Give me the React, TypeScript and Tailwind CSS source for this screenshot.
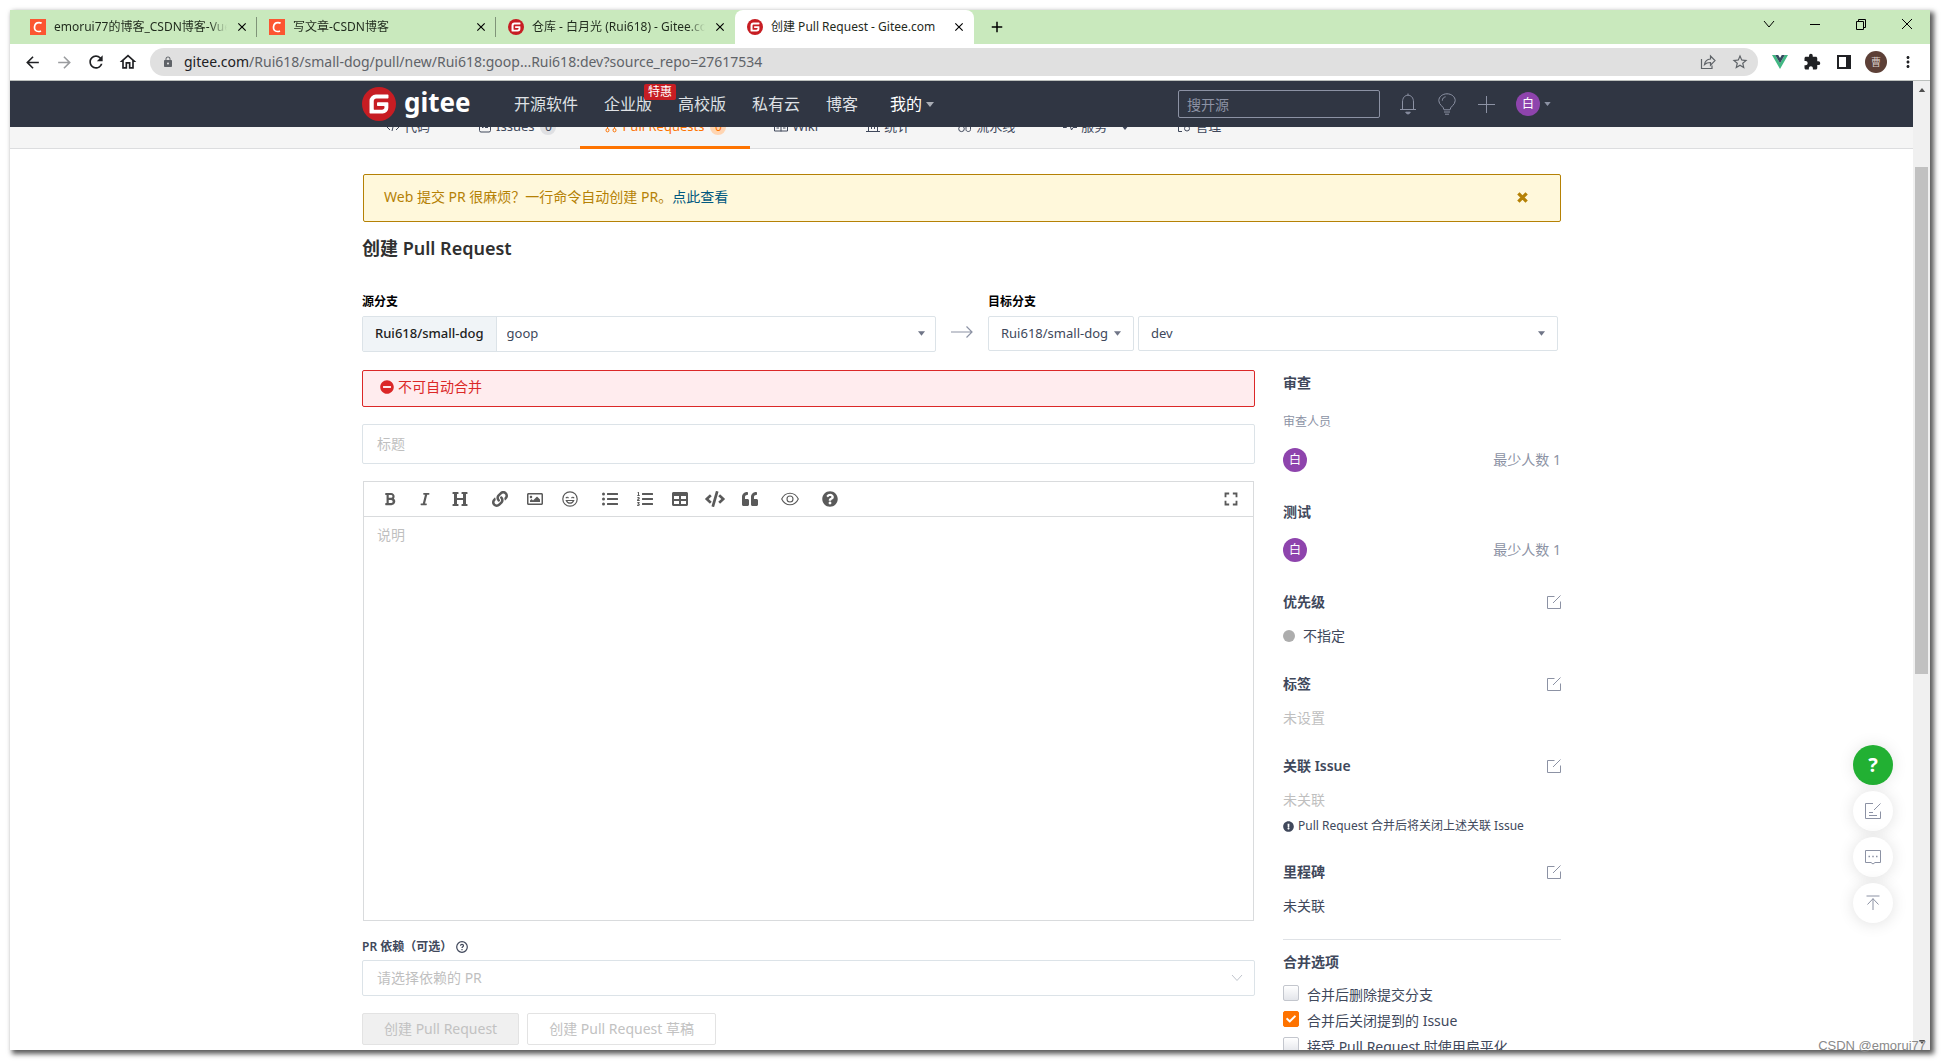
import React, { useState } from 'react';
import {
  FaBold,
  FaItalic,
  FaHeading,
  FaLink,
  FaRegImage,
  FaListUl,
  FaListOl,
  FaTable,
  FaCode,
  FaQuoteLeft,
  FaQuestionCircle,
  FaMinusCircle,
  FaExclamationCircle,
  FaCheck,
} from 'react-icons/fa';
import {
  MdArrowBack,
  MdArrowForward,
  MdRefresh,
  MdOutlineHome,
  MdLock,
  MdStarBorder,
  MdExtension,
  MdMoreVert,
  MdClose,
  MdAdd,
  MdFullscreen,
} from 'react-icons/md';

type IconProps = { className?: string };

/* ---------- 图标 ---------- */

const GiteeMark: React.FC<IconProps> = ({ className }) => (
  <svg className={className} viewBox="0 0 24 24">
    <circle cx="12" cy="12" r="12" fill="#c71d23" />
    <path
      d="M18.1 5.3H9.8a4.5 4.5 0 0 0-4.5 4.5v8.3c0 .3.3.6.6.6h8.7a4 4 0 0 0 4-4v-3.4a.6.6 0 0 0-.6-.6h-6.8a.6.6 0 0 0-.6.6v1.5c0 .3.3.6.6.6h4.1c.3 0 .6.3.6.6v.3c0 1-.8 1.8-1.8 1.8H8.9a.6.6 0 0 1-.6-.6V9.9c0-1 .8-1.8 1.8-1.8h8c.3 0 .6-.3.6-.6V5.9a.6.6 0 0 0-.6-.6z"
      fill="#fff"
    />
  </svg>
);

const CsdnMark: React.FC<IconProps> = ({ className }) => (
  <svg className={className} viewBox="0 0 16 16">
    <rect width="16" height="16" fill="#fc5531" />
    <path d="M11.6 4.3C10.9 3.8 10 3.6 9 3.6 6.6 3.6 4.7 5.4 4.5 8.1c-.2 2.7 1.3 4.4 3.8 4.4 1 0 1.9-.2 2.7-.6" fill="none" stroke="#fff" strokeWidth="1.7" />
  </svg>
);

const Caret: React.FC<IconProps> = ({ className }) => (
  <svg className={className} viewBox="0 0 8 5">
    <path d="M0 0h8L4 5z" fill="currentColor" />
  </svg>
);

const CrossIcon: React.FC<IconProps> = ({ className }) => (
  <svg className={className} viewBox="0 0 12 12" stroke="currentColor" strokeWidth="3.6">
    <path d="M1.5 1.5l9 9M10.5 1.5l-9 9" />
  </svg>
);

const EditIcon: React.FC<IconProps> = ({ className }) => (
  <svg className={className} viewBox="0 0 14 14" fill="none" stroke="currentColor">
    <path d="M7.5 1.5h-7v12h13v-7M6 8l7.5-7.5" />
  </svg>
);

const BellIcon: React.FC<IconProps> = ({ className }) => (
  <svg className={className} viewBox="0 0 20 22" fill="none" stroke="currentColor">
    <path d="M10 .5v1.7M4.5 16.5V9c0-4 2.2-6.8 5.5-6.8s5.5 2.8 5.5 6.8v7.5M2 16.5h16" />
    <path d="M7.7 19.2h4.6l-1.3 1.6h-2z" fill="currentColor" />
  </svg>
);

const BulbIcon: React.FC<IconProps> = ({ className }) => (
  <svg className={className} viewBox="0 0 20 22" fill="none" stroke="currentColor">
    <path d="M7 16.8c0-3.2-5.2-4.800-5.2-9.100C1.800 3.700 5.500.8 10 .8s8.200 2.900 8.200 6.900c0 4.300-5.200 5.900-5.200 9.100zM5.300 7.700c0-2.200 1.400-3.600 3.300-3.900M7 19h6M8 21.200h4" />
  </svg>
);

const SmileIcon: React.FC<IconProps> = ({ className }) => (
  <svg className={className} viewBox="0 0 16 16" fill="none" stroke="currentColor" strokeWidth="1.2">
    <circle cx="8" cy="8" r="7.2" />
    <path d="M4 7.2c.4-1.3 2-1.3 2.4 0M9.6 7.2c.4-1.3 2-1.3 2.4 0M4.3 9.5c.7 1.8 2 2.7 3.7 2.7s3-.9 3.7-2.7z" />
  </svg>
);

const EyeIcon: React.FC<IconProps> = ({ className }) => (
  <svg className={className} viewBox="0 0 18 14" fill="none" stroke="currentColor" strokeWidth="1.1">
    <path d="M.7 7C2.5 3.2 5.5 1.2 9 1.2S15.5 3.2 17.3 7c-1.8 3.8-4.8 5.800-8.300 5.800S2.500 10.800.7 7z" />
    <circle cx="9" cy="7" r="3" />
  </svg>
);

const VueIcon: React.FC<IconProps> = ({ className }) => (
  <svg className={className} viewBox="0 0 16 14">
    <path d="M0 0h3.2L8 8.3 12.8 0H16L8 14z" fill="#41b883" />
    <path d="M3.2 0h3L8 3.1 9.8 0h3L8 8.3z" fill="#34495e" />
  </svg>
);

/* ---------- 浏览器外框 ---------- */

const tabs = [
  { title: 'emorui77的博客_CSDN博客-Vue', csdn: true, active: false },
  { title: '写文章-CSDN博客', csdn: true, active: false },
  { title: '仓库 - 白月光 (Rui618) - Gitee.com', csdn: false, active: false },
  { title: '创建 Pull Request - Gitee.com', csdn: false, active: true },
];

const TabStrip: React.FC = () => (
  <div className="flex h-[34px] shrink-0 items-stretch bg-[#c9e9bd] pl-2 text-xs text-[#1f2a1c]">
    {tabs.map((tab, i) => (
      <div
        key={tab.title}
        className={`flex w-[239px] items-center pr-2 pl-3 ${
          tab.active ? 'rounded-t-lg bg-white' : i < 2 ? 'relative after:absolute after:right-0 after:h-5 after:w-px after:bg-[#7f9478]' : ''
        }`}
      >
        {tab.csdn ? <CsdnMark className="h-4 w-4 shrink-0" /> : <GiteeMark className="h-4 w-4 shrink-0" />}
        <span className={`ml-2 flex-1 overflow-hidden whitespace-nowrap ${tab.active ? '' : 'mask-r-from-90%'}`}>{tab.title}</span>
        <button aria-label="关闭标签页" className="ml-2 text-black">
          <MdClose className="h-3.5 w-3.5" />
        </button>
      </div>
    ))}
    <button aria-label="新标签页" className="ml-3.5 text-black">
      <MdAdd className="h-[18px] w-[18px]" />
    </button>
    <div className="ml-auto flex h-7 items-center text-black">
      <button aria-label="搜索标签页" className="flex w-[46px] justify-center">
        <svg className="h-3 w-3" viewBox="0 0 12 12" fill="none" stroke="currentColor"><path d="M1 3l5 6 5-6" /></svg>
      </button>
      <button aria-label="最小化" className="flex w-[46px] justify-center">
        <svg className="h-3 w-3" viewBox="0 0 12 12" fill="none" stroke="currentColor"><path d="M1 6.5h10" /></svg>
      </button>
      <button aria-label="还原" className="flex w-[46px] justify-center">
        <svg className="h-3 w-3" viewBox="0 0 12 12" fill="none" stroke="currentColor"><path d="M1.5 3.5h7v8h-7zM3.5 3.5v-2h7v8h-2" /></svg>
      </button>
      <button aria-label="关闭" className="flex w-[46px] justify-center">
        <svg className="h-3 w-3" viewBox="0 0 12 12" fill="none" stroke="currentColor"><path d="M1 1l10 10M11 1L1 11" /></svg>
      </button>
    </div>
  </div>
);

const AddressBar: React.FC = () => (
  <div className="flex h-[37px] shrink-0 items-center border-b border-[#bcc0bd] bg-white pr-1.5 pl-1.5 text-[#202124]">
    <button aria-label="后退" className="flex w-8 justify-center"><MdArrowBack className="h-[19px] w-[19px]" /></button>
    <button aria-label="前进" className="flex w-8 justify-center text-[#9a9c9f]"><MdArrowForward className="h-[19px] w-[19px]" /></button>
    <button aria-label="刷新" className="flex w-8 justify-center"><MdRefresh className="h-5 w-5" /></button>
    <button aria-label="主页" className="flex w-8 justify-center"><MdOutlineHome className="h-5 w-5" /></button>
    <div className="ml-1.5 flex h-7 flex-1 items-center rounded-full bg-[#e0e0e0] pr-2 pl-3 text-[#5f6368]">
      <MdLock className="h-3 w-3" />
      <div className="ml-2.5 flex-1 text-sm whitespace-nowrap">
        <span className="text-[#202124]">gitee.com</span>/Rui618/small-dog/pull/new/Rui618:goop...Rui618:dev?source_repo=27617534
      </div>
      <button aria-label="分享此页面" className="flex w-8 justify-center">
        <svg className="h-4 w-4" viewBox="0 0 16 16" fill="none" stroke="currentColor" strokeWidth="1.2">
          <path d="M1.5 5v9.5h10.5v-3M4.500 10.500c.5-3.500 2.500-5.300 6-5.500V2l4.500 4.600-4.500 4.600V8.500c-2.700 0-4.500.5-6 2z" />
        </svg>
      </button>
      <button aria-label="收藏" className="-mr-1.5 flex w-8 justify-center"><MdStarBorder className="h-[18px] w-[18px]" /></button>
    </div>
    <div className="ml-1.5 flex">
      <button aria-label="Vue.js devtools" className="flex w-8 items-center justify-center"><VueIcon className="w-4" /></button>
      <button aria-label="扩展程序" className="flex w-8 items-center justify-center"><MdExtension className="h-[18px] w-[18px]" /></button>
      <button aria-label="侧边栏" className="flex w-8 items-center justify-center">
        <svg className="h-3.5 w-3.5" viewBox="0 0 14 14"><path d="M1 1h12v12H1z" fill="none" stroke="currentColor" strokeWidth="2" /><path d="M9 0h5v14H9z" fill="currentColor" /></svg>
      </button>
      <button aria-label="个人资料" className="flex w-8 items-center justify-center">
        <span className="flex h-[22px] w-[22px] items-center justify-center rounded-full bg-[#5d4037] text-[10px] text-[#d7ccc8]">曹</span>
      </button>
      <button aria-label="更多" className="flex w-8 items-center justify-center"><MdMoreVert className="h-[18px] w-[18px]" /></button>
    </div>
  </div>
);

/* ---------- Gitee 页面 ---------- */

const Avatar: React.FC = () => (
  <span className="flex h-6 w-6 items-center justify-center rounded-full bg-[#8e44ad] text-xs text-white">白</span>
);

const SiteHeader: React.FC = () => (
  <header className="relative z-10 h-[46px] bg-[#303643]">
    <div className="mx-auto flex h-full max-w-[1199px] items-center text-base text-[#dfe1e5]">
      <a href="#" className="flex w-[152px] items-center text-white">
        <GiteeMark className="h-[34px] w-[34px]" />
        <span className="ml-2 pb-1 text-[26px] leading-8 font-bold">gitee</span>
      </a>
      <nav className="flex gap-[26px]">
        <a href="#">开源软件</a>
        <a href="#" className="relative">
          企业版
          <span className="absolute -top-2 left-10 rounded-xs bg-[#c71d23] px-1 text-xs leading-4 whitespace-nowrap text-white">特惠</span>
        </a>
        <a href="#">高校版</a>
        <a href="#">私有云</a>
        <a href="#">博客</a>
        <a href="#" className="ml-1.5 flex items-center gap-1 text-white">
          我的<Caret className="h-[5px] w-2 text-[#a9adb5]" />
        </a>
      </nav>
      <div className="ml-auto flex items-center text-[#8c92a4]">
        <input
          aria-label="搜开源"
          placeholder="搜开源"
          className="mr-2 h-7 w-[202px] rounded-xs border border-[#8c92a4] bg-transparent px-2 text-sm text-white outline-none placeholder:text-[#8c92a4]"
        />
        <button aria-label="通知" className="flex w-[39px] justify-center"><BellIcon className="h-[22px] w-5" /></button>
        <button aria-label="灵感" className="flex w-[39px] justify-center"><BulbIcon className="h-[22px] w-5" /></button>
        <button aria-label="新建" className="flex w-[39px] justify-center">
          <svg className="h-[18px] w-[18px]" viewBox="0 0 18 18" stroke="currentColor"><path d="M1 9.5h17M9.5 1v17" /></svg>
        </button>
        <button aria-label="个人菜单" className="ml-[11px] flex items-center gap-1 pr-2.5">
          <Avatar />
          <Caret className="h-1 w-[7px]" />
        </button>
      </div>
    </div>
  </header>
);

const repoTabs = [
  { name: '代码', icon: <path d="M4 4L1 7l3 3M10 4l3 3-3 3M8 3L6 11" /> },
  { name: 'Issues', count: 0, icon: <path d="M3 1.5h8a1.5 1.5 0 0 1 1.5 1.5v7.5a1.5 1.5 0 0 1-1.5 1.5H3a1.5 1.5 0 0 1-1.5-1.5V3A1.5 1.5 0 0 1 3 1.5zM4 7.500h1.500M7 7.500h3" /> },
  { name: 'Pull Requests', count: 0, active: true, icon: <path d="M3.5 8.5V3M10.500 8.500V5.500L7.500 2.500M3.500 8.500a1.500 1.700 0 1 0 0 3.400 1.500 1.700 0 0 0 0-3.400zM10.500 8.500a1.500 1.700 0 1 0 0 3.400 1.500 1.700 0 0 0 0-3.400z" /> },
  { name: 'Wiki', icon: <path d="M7 3v8.5M.5 2.500H5c1.300 0 2 .5 2 1 0-.5.7-1 2-1h4.500v8.500H.5zM2.500 8h2.500M9 8h2.500" /> },
  { name: '统计', icon: <path d="M1 1.5h12M0 11.500h14M2.500 11V5M5.500 9V5M8.500 9V4M11.500 11V2" /> },
  { name: '流水线', icon: <path d="M3.5 1v4M3.500 6a2.800 2.800 0 1 0 0 5.600 2.800 2.800 0 0 0 0-5.600zM8 1v8.500c0 1.300 1 2 2.300 2s2.200-.7 2.200-2V3" /> },
  { name: '服务', caret: true, icon: <path d="M0 7.5h3.500L6 2.500l2.500 7.500 1.500-2.500h4" /> },
  { name: '管理', icon: <path d="M7 1.5H1.500v10H5M8 3.500h4M10 6a2.300 2.300 0 1 0 0 5 2.300 2.300 0 0 0 0-5z" /> },
];

const RepoNav: React.FC = () => (
  <div className="-mt-5 border-b border-[#dcdddf] bg-[#f5f5f5]">
    <nav className="mx-auto flex max-w-[1199px] text-[13px] text-[#40485b]">
      {repoTabs.map((tab) => (
        <a
          key={tab.name}
          href="#"
          className={`-mb-px flex h-[42px] items-center gap-1 px-6 ${tab.active ? 'border-b-3 border-[#fe7300] pt-px text-[#fe7300]' : 'pb-0.5'}`}
        >
          <svg className="h-3.5 w-3.5" viewBox="0 0 14 14" fill="none" stroke="currentColor">{tab.icon}</svg>
          {tab.name}
          {tab.count !== undefined && (
            <span className={`ml-0.5 flex h-4 w-4 items-center justify-center rounded-full text-xs ${tab.active ? 'bg-[#ffd5b2]' : 'bg-[#dfe0e3]'}`}>
              {tab.count}
            </span>
          )}
          {tab.caret && <Caret className="ml-2.5 h-[5px] w-2" />}
        </a>
      ))}
    </nav>
  </div>
);

const BranchPicker: React.FC = () => (
  <div className="mt-[31px] flex pr-[3px] text-[13px] text-[#40485b]">
    <div className="flex-[574]">
      <label htmlFor="source-branch" className="block text-xs leading-[18px] font-bold text-black">源分支</label>
      <div className="mt-[5px] flex h-9 items-stretch rounded-xs border border-[#dce3e8]">
        <span className="flex items-center border-r border-[#dce3e8] bg-[#f0f4f7] px-3 font-medium text-[#212121]">Rui618/small-dog</span>
        <div className="relative flex-1">
          <select id="source-branch" className="h-full w-full appearance-none bg-transparent px-2.5 outline-none">
            <option>goop</option>
          </select>
          <Caret className="pointer-events-none absolute top-3.5 right-2.5 h-[5px] w-[7px] text-[#6f7587]" />
        </div>
      </div>
    </div>
    <div className="flex w-[52px] items-end justify-center pb-[14px] text-[#8c92a4]">
      <svg className="h-3 w-[22px]" viewBox="0 0 22 12" fill="none" stroke="currentColor" strokeWidth="1.2"><path d="M0 6h21M15.5.5L21 6l-5.5 5.5" /></svg>
    </div>
    <div className="flex-[570]">
      <label htmlFor="target-branch" className="block text-xs leading-[18px] font-bold text-black">目标分支</label>
      <div className="mt-[5px] flex h-[35px] gap-1">
        <div className="relative w-[146px] rounded-xs border border-[#dce3e8]">
          <select aria-label="目标仓库" className="h-full w-full appearance-none bg-transparent pl-3 outline-none">
            <option>Rui618/small-dog</option>
          </select>
          <Caret className="pointer-events-none absolute top-3.5 right-3 h-[5px] w-[7px] text-[#6f7587]" />
        </div>
        <div className="relative flex-1 rounded-xs border border-[#dce3e8]">
          <select id="target-branch" className="h-full w-full appearance-none bg-transparent px-3 outline-none">
            <option>dev</option>
          </select>
          <Caret className="pointer-events-none absolute top-3.5 right-3 h-[5px] w-[7px] text-[#6f7587]" />
        </div>
      </div>
    </div>
  </div>
);

const toolGroups = [
  [
    { label: '粗体', icon: <FaBold className="h-3.5 w-3.5" /> },
    { label: '斜体', icon: <FaItalic className="h-3.5 w-3.5" /> },
    { label: '标题', icon: <FaHeading className="h-4 w-4" /> },
  ],
  [
    { label: '链接', icon: <FaLink className="h-4 w-4" /> },
    { label: '图片', icon: <FaRegImage className="h-4 w-4" /> },
    { label: '表情', icon: <SmileIcon className="h-4 w-4" /> },
  ],
  [
    { label: '无序列表', icon: <FaListUl className="h-4 w-4" /> },
    { label: '有序列表', icon: <FaListOl className="h-4 w-4" /> },
    { label: '表格', icon: <FaTable className="h-4 w-4" /> },
    { label: '代码', icon: <FaCode className="h-4 w-5" /> },
    { label: '引用', icon: <FaQuoteLeft className="h-4 w-4" /> },
  ],
  [{ label: '预览', icon: <EyeIcon className="h-3.5 w-[18px]" /> }],
  [{ label: '帮助', icon: <FaQuestionCircle className="h-4 w-4" /> }],
];

const Editor: React.FC = () => {
  const [description, setDescription] = useState('');

  return (
    <div className="mx-px mt-[17px] flex h-[440px] flex-col border border-[#d9dbdd]">
      <div className="flex h-[35px] items-center gap-[5px] border-b border-[#d9dbdd] pr-[11px] pl-2 text-[#5a5a5a]">
        {toolGroups.map((group, i) => (
          <div key={i} className="flex">
            {group.map((tool) => (
              <button key={tool.label} aria-label={tool.label} className="flex w-[35px] items-center justify-center">
                {tool.icon}
              </button>
            ))}
          </div>
        ))}
        <button aria-label="全屏" className="ml-auto"><MdFullscreen className="h-[22px] w-[22px]" /></button>
      </div>
      <textarea
        aria-label="说明"
        placeholder="说明"
        value={description}
        onChange={(e) => setDescription(e.target.value)}
        className="flex-1 resize-none px-[13px] py-1.5 text-sm leading-6 outline-none placeholder:text-[#bfbfbf]"
      />
    </div>
  );
};

const Heading: React.FC<{ children: React.ReactNode; className?: string; editable?: boolean }> = ({ children, className, editable }) => (
  <div className={`flex items-center justify-between leading-5 ${className ?? ''}`}>
    <h2 className="font-semibold">{children}</h2>
    {editable && (
      <button aria-label="编辑" className="text-[#8c92a4]"><EditIcon className="h-3.5 w-3.5" /></button>
    )}
  </div>
);

const Reviewer: React.FC = () => (
  <div className="mt-4 flex items-center justify-between text-[#8c92a4]">
    <Avatar />
    <span>最少人数 1</span>
  </div>
);

const mergeOptions = [
  { id: 'prune', label: '合并后删除提交分支', checked: false },
  { id: 'close-issue', label: '合并后关闭提到的 Issue', checked: true },
  { id: 'squash', label: '接受 Pull Request 时使用扁平化', checked: false },
];

const Sidebar: React.FC = () => {
  const [options, setOptions] = useState(mergeOptions);

  const toggleOption = (id: string) => {
    setOptions(options.map((o) => (o.id === id ? { ...o, checked: !o.checked } : o)));
  };

  return (
    <aside className="w-[278px] shrink-0 pt-[3px] text-sm leading-5 text-[#40485b]">
      <Heading>审查</Heading>
      <p className="mt-[19px] text-xs leading-5 text-[#8c92a4]">审查人员</p>
      <Reviewer />

      <Heading className="mt-[30px]">测试</Heading>
      <Reviewer />

      <Heading editable className="mt-[30px]">优先级</Heading>
      <p className="mt-3.5 flex items-center gap-2">
        <span className="h-3 w-3 rounded-full bg-[#adadad]" />不指定
      </p>

      <Heading editable className="mt-7">标签</Heading>
      <p className="mt-3.5 text-[#bfbfbf]">未设置</p>

      <Heading editable className="mt-7">关联 Issue</Heading>
      <p className="mt-3.5 text-[#bfbfbf]">未关联</p>
      <p className="mt-1.5 flex items-center gap-1 text-xs leading-5">
        <FaExclamationCircle className="h-[11px] w-[11px]" />Pull Request 合并后将关闭上述关联 Issue
      </p>

      <Heading editable className="mt-[26px]">里程碑</Heading>
      <p className="mt-3.5">未关联</p>

      <hr className="mt-[23px] border-[#dfe2e6]" />
      <Heading className="mt-3">合并选项</Heading>
      <div className="mt-[13px]">
        {options.map((option) => (
          <label key={option.id} className="relative flex h-[26px] items-start gap-2 whitespace-nowrap">
            <input
              type="checkbox"
              checked={option.checked}
              onChange={() => toggleOption(option.id)}
              className="h-4 w-4 appearance-none rounded-xs border border-[#c3c6cd] bg-linear-to-b from-white to-[#e3e5ea] checked:border-[#fe7300] checked:bg-[#fe7300] checked:bg-none"
            />
            {option.checked && <FaCheck className="pointer-events-none absolute top-[3px] left-[3px] h-2.5 w-2.5 text-white" />}
            {option.label}
          </label>
        ))}
      </div>
    </aside>
  );
};

const FloatingTools: React.FC = () => (
  <div className="absolute right-5 bottom-[127px] flex flex-col gap-1.5 text-[#8c92a4]">
    <button className="flex h-10 w-10 items-center justify-center rounded-full bg-[#22b033] text-xl font-bold text-white shadow-[0_0_16px_rgba(0,0,0,0.1)]">?</button>
    <button aria-label="反馈" className="flex h-10 w-10 items-center justify-center rounded-full bg-white shadow-[0_1px_16px_rgba(0,0,0,0.12)]">
      <svg className="h-4 w-4" viewBox="0 0 16 16" fill="none" stroke="currentColor"><path d="M8 .5H.5v15h15v-7M9 7l6.5-6.5M4 9.5h4M4 12.5h8" /></svg>
    </button>
    <button aria-label="评论" className="flex h-10 w-10 items-center justify-center rounded-full bg-white shadow-[0_1px_16px_rgba(0,0,0,0.12)]">
      <svg className="h-4 w-4" viewBox="0 0 16 16" fill="none" stroke="currentColor">
        <path d="M.5 1.5h15v12H10l-2 1.500-2-1.500H.5z" />
        <path d="M3.5 7.500h1.500M7.250 7.500h1.500M11 7.500h1.500" strokeWidth="1.5" />
      </svg>
    </button>
    <button aria-label="回到顶部" className="flex h-10 w-10 items-center justify-center rounded-full bg-white shadow-[0_1px_16px_rgba(0,0,0,0.12)]">
      <svg className="h-4 w-4" viewBox="0 0 16 16" fill="none" stroke="currentColor"><path d="M1.5 1h13M8 3.5V15M2.500 9.500L8 3.700l5.500 5.800" /></svg>
    </button>
  </div>
);

const Scrollbar: React.FC = () => (
  <div className="flex w-[17px] shrink-0 flex-col items-center bg-[#f0f0f0] text-[#505050]">
    <span className="flex h-[17px] items-center"><Caret className="h-1 w-2 rotate-180" /></span>
    <div className="w-[13px] flex-[69]" />
    <div className="w-[13px] flex-[508] bg-[#c1c1c1]" />
    <div className="flex-[360]" />
    <span className="flex h-[17px] items-center"><Caret className="h-1 w-2" /></span>
  </div>
);

const App: React.FC = () => {
  const [title, setTitle] = useState('');
  const [tipVisible, setTipVisible] = useState(true);

  return (
    <div className="relative h-screen overflow-hidden bg-white p-2.5 pr-[11px] pb-[11px] font-['Noto_Sans','Noto_Sans_CJK_SC',sans-serif]">
      <div className="flex h-full flex-col bg-white shadow-[3px_3px_5px_1px_rgba(0,0,0,0.65)]">
        <TabStrip />
        <AddressBar />

        <div className="flex min-h-0 flex-1">
          <div className="relative min-w-0 flex-1 overflow-hidden">
            <SiteHeader />
            <RepoNav />

            <main className="mx-auto max-w-[1199px] pt-[25px]">
              {tipVisible && (
                <div className="ml-px flex h-12 items-center justify-between rounded-xs border border-[#b58105] bg-[#fff8db] pr-8 pb-0.5 pl-5 text-sm text-[#b58105]">
                  <p>
                    Web 提交 PR 很麻烦？一行命令自动创建 PR。
                    <a href="#" className="text-[#005980]">点此查看</a>
                  </p>
                  <button aria-label="关闭提示" onClick={() => setTipVisible(false)}><CrossIcon className="h-[11px] w-[11px]" /></button>
                </div>
              )}

              <h1 className="mt-[13px] text-lg leading-[27px] font-semibold text-[#303030]">创建 Pull Request</h1>
              <BranchPicker />

              <div className="mt-[18px] flex gap-7">
                <form className="min-w-0 flex-1" onSubmit={(e) => e.preventDefault()}>
                  <div className="flex h-[37px] items-center gap-1 rounded-xs border border-[#db2828] bg-[#ffecee] pb-1 pl-[17px] text-sm text-[#db2828]">
                    <FaMinusCircle className="h-3.5 w-3.5" />不可自动合并
                  </div>
                  <input
                    aria-label="标题"
                    placeholder="标题"
                    value={title}
                    onChange={(e) => setTitle(e.target.value)}
                    className="mt-[17px] block h-10 w-full rounded-xs border border-[#dce3e8] px-3.5 pb-0.5 text-sm outline-none placeholder:text-[#bfbfbf]"
                  />
                  <Editor />

                  <label htmlFor="pr-depend" className="mt-[17px] flex items-center text-xs leading-[18px] font-semibold text-[#40485b]">
                    PR 依赖（可选）
                    <svg className="ml-1 h-3 w-3" viewBox="0 0 12 12" fill="none" stroke="currentColor" strokeWidth="1.2">
                      <circle cx="6" cy="6" r="5.3" />
                      <path d="M4.5 4.8c0-2 3-2 3 0C7.500 5.800 6 5.800 6 7M6 8v1.200" />
                    </svg>
                  </label>
                  <div className="relative mt-1">
                    <select id="pr-depend" className="h-9 w-full appearance-none rounded-xs border border-[#dce3e8] bg-white px-3.5 text-sm text-[#bfbfbf] outline-none">
                      <option>请选择依赖的 PR</option>
                    </select>
                    <svg className="pointer-events-none absolute top-3.5 right-3 h-2 w-3" viewBox="0 0 12 8" fill="none" stroke="#c0c4cc"><path d="M1 1l5 5.5L11 1" /></svg>
                  </div>

                  <div className="mt-[17px] flex gap-2 text-sm text-[#c2c2c2]">
                    <button disabled className="h-8 rounded-xs border border-[#e3e3e3] bg-[#f0f0f0] px-[21px]">创建 Pull Request</button>
                    <button disabled className="h-8 rounded-xs border border-[#e3e3e3] bg-white px-[21px]">创建 Pull Request 草稿</button>
                  </div>
                </form>
                <Sidebar />
              </div>
            </main>

            <FloatingTools />
          </div>
          <Scrollbar />
        </div>
      </div>
      <span className="absolute right-[15px] bottom-1.5 font-['Liberation_Sans',sans-serif] text-[13px] leading-[18px] text-[#8a8a8a]">CSDN @emorui77</span>
    </div>
  );
};

export default App;
